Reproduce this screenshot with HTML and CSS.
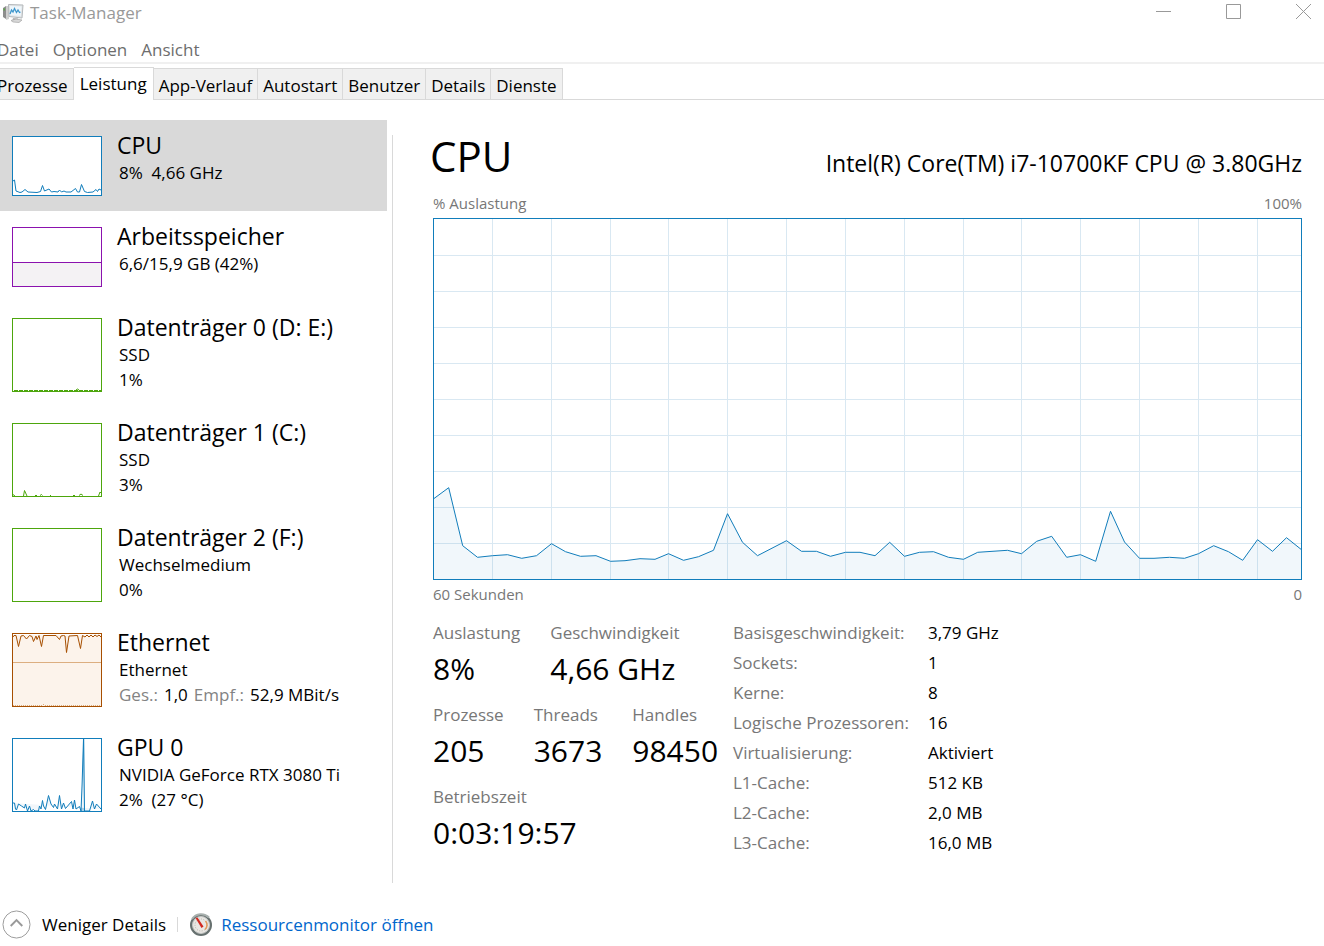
FILE: index.html
```html
<!DOCTYPE html>
<html lang="de">
<head>
<meta charset="utf-8">
<meta name="viewport" content="width=device-width, initial-scale=1">
<title>Task-Manager</title>
<link rel="stylesheet" href="styles.css">
</head>
<body>
<div class="window">
  <header class="titlebar">
    <svg class="app-icon" viewBox="0 0 22 20" aria-hidden="true">
      <path d="M1 5l3-2v13l-3-2z" fill="#8d8d8d"/>
      <path d="M4 3h3v13l-3 1z" fill="#cfcfcf"/>
      <rect x="1.500" y="5.500" width="1.500" height="2" fill="#58a846"/>
      <path d="M6.500 1.500l14.500.5-1 13-13-1.500z" fill="#e3e6e8" stroke="#b4b8bb" stroke-width="1"/>
      <path d="M8 3l11.500.5-.8 9.500-10.700-1z" fill="#eef6fb"/>
      <path d="M8 11l1.500-4 1.500 2 1.500-3.500 2 4 1.500-2.500 1.500 2.500 1-.5" fill="none" stroke="#3f97cc" stroke-width="1.300"/>
      <path d="M11 15l5 .5.500 2-6-.5z" fill="#b5b5b5"/>
      <path d="M9 17.500l5-1.500 6 1-3 2.500-6-.5z" fill="#d8d8d8" stroke="#a5a5a5" stroke-width=".7"/>
    </svg>
    <h1 class="app-title">Task-Manager</h1>
    <div class="window-controls">
      <button type="button" class="control" aria-label="Minimieren"><svg viewBox="0 0 15 15"><path d="M0 7.500h15"/></svg></button>
      <button type="button" class="control" aria-label="Maximieren"><svg viewBox="0 0 15 15"><path d="M.5.500h14v14H.5z"/></svg></button>
      <button type="button" class="control" aria-label="Schließen"><svg viewBox="0 0 15 15"><path d="M0 0l15 15M15 0L0 15"/></svg></button>
    </div>
  </header>

  <nav class="menubar" aria-label="Menü">
    <button type="button">Datei</button>
    <button type="button">Optionen</button>
    <button type="button">Ansicht</button>
  </nav>

  <div class="tabs" role="tablist">
    <button type="button" role="tab" class="tab">Prozesse</button>
    <button type="button" role="tab" class="tab tab-active" aria-selected="true">Leistung</button>
    <button type="button" role="tab" class="tab">App-Verlauf</button>
    <button type="button" role="tab" class="tab">Autostart</button>
    <button type="button" role="tab" class="tab">Benutzer</button>
    <button type="button" role="tab" class="tab">Details</button>
    <button type="button" role="tab" class="tab">Dienste</button>
  </div>

  <main class="content">
    <nav class="resources" aria-label="Ressourcen">
      <button type="button" class="resource resource-short resource-active">
        <svg class="thumb blue" viewBox="0 0 88 58" preserveAspectRatio="none">
          <polyline points="0,44 1.500,43 3,54 7,55.500 9,55 12,52.500 15,55 24,55.500 27.500,54.500 29.500,48.500 31.500,54 36,52 38.500,55 41,54.500 45,55 46.500,53 48.500,55 51,54 53,55 58,55 62.500,51.500 64.500,55 66.500,55 68.500,47.500 71.500,54.500 74.500,55.500 80,55 83,52.500 84.500,54.500 86,52 88,53"/>
        </svg>
        <span class="resource-text"><span class="resource-name">CPU</span><span class="resource-line">8%&nbsp; 4,66 GHz</span></span>
      </button>
      <button type="button" class="resource resource-short">
        <svg class="thumb purple" viewBox="0 0 88 58" preserveAspectRatio="none">
          <rect class="area" x="0" y="34" width="88" height="24"/>
          <path d="M0 34.500h88"/>
        </svg>
        <span class="resource-text"><span class="resource-name">Arbeitsspeicher</span><span class="resource-line">6,6/15,9 GB (42%)</span></span>
      </button>
      <button type="button" class="resource">
        <svg class="thumb green" viewBox="0 0 88 72" preserveAspectRatio="none">
          <path d="M1 71.500h87" stroke-dasharray="4 1"/><path d="M63 71l1.500-1 1.500 1"/>
        </svg>
        <span class="resource-text"><span class="resource-name">Datenträger 0 (D: E:)</span><span class="resource-line">SSD</span><span class="resource-line">1%</span></span>
      </button>
      <button type="button" class="resource">
        <svg class="thumb green" viewBox="0 0 88 72" preserveAspectRatio="none">
          <path d="M0 70.500l2 1.500M10.500 72l1-5.500 2.500 5.500M22 71.500h2M27 71.500l1.500-1 1 1M37 71.500h1M60 71.500h2M66 71.500l2-1.500 2 1.500M85.500 72l1.500-4 1 1"/>
        </svg>
        <span class="resource-text"><span class="resource-name">Datenträger 1 (C:)</span><span class="resource-line">SSD</span><span class="resource-line">3%</span></span>
      </button>
      <button type="button" class="resource">
        <svg class="thumb green" viewBox="0 0 88 72" preserveAspectRatio="none"></svg>
        <span class="resource-text"><span class="resource-name">Datenträger 2 (F:)</span><span class="resource-line">Wechselmedium</span><span class="resource-line">0%</span></span>
      </button>
      <button type="button" class="resource">
        <svg class="thumb orange" viewBox="0 0 88 72" preserveAspectRatio="none">
          <rect class="area" x="0" y="1" width="88" height="71"/>
          <path class="faint" d="M0 28.500h88"/>
          <polyline points="0,3 1,1.500 3,1.500 5.500,12.500 8,2 10.500,1.500 13.500,5 16.500,1.500 19,2.500 20.500,7.500 23,2 24,5.500 26,1.500 28.500,12.500 30.500,1.500 43,1.500 46.500,5.500 48,2 50.500,1.500 52,2 53.500,18.500 56,2 64.500,1.500 67.500,14.500 69.500,1.500 72,3 74,1 76,3 78,1 80,3 82,1 84,2.500 86,1 88,3"/>
          <path class="faint" d="M0 71.500h30M30 70.500h1M32 71.500h56" stroke-dasharray="1 1"/>
        </svg>
        <span class="resource-text"><span class="resource-name">Ethernet</span><span class="resource-line">Ethernet</span><span class="resource-line rates"><span class="muted">Ges.:</span><span>1,0</span><span class="muted">Empf.:</span><span>52,9 MBit/s</span></span></span>
      </button>
      <button type="button" class="resource">
        <svg class="thumb blue" viewBox="0 0 88 72" preserveAspectRatio="none">
          <polygon class="spike" points="68,72 69.500,30 70.300,0 71.500,0 71.700,72"/>
          <polyline class="area-line" points="0,64 1.500,64 2.500,70 3.500,71 5.500,65 8.500,67 11.500,69 12.500,65 14.500,72 16.500,67 18,72 20.500,70.500 22,72 25.500,72 26.500,67 28,70 29.500,61.500 30.500,67 32.500,70.500 35.500,56.500 38,65 40.500,68.500 41.500,65 44.500,70 46.500,56.500 48.500,70 50.500,64 52.500,69.500 58.500,62.500 60,70 61.500,61 63,70 66.500,67.500 68,72 69,48 70.500,0 71.500,72 76.500,72 79.500,62 81.500,70 83.500,65 88,70"/>
        </svg>
        <span class="resource-text"><span class="resource-name">GPU 0</span><span class="resource-line">NVIDIA GeForce RTX 3080 Ti</span><span class="resource-line">2%&nbsp; (27 °C)</span></span>
      </button>
    </nav>

    <section class="detail">
      <div class="detail-head">
        <h2 class="detail-title">CPU</h2>
        <p class="detail-model">Intel(R) Core(TM) i7-10700KF CPU @ 3.80GHz</p>
      </div>
      <div class="axis axis-top"><span>% Auslastung</span><span>100%</span></div>
      <svg class="chart" viewBox="0 0 867 360" preserveAspectRatio="none" role="img" aria-label="CPU-Auslastung">
        <path class="grid" d="M0 36.500h867M0 72.500h867M0 108.500h867M0 144.500h867M0 180.500h867M0 216.500h867M0 252.500h867M0 288.500h867M0 324.500h867M58.500 0v360M117.500 0v360M176.500 0v360M234.500 0v360M293.500 0v360M352.500 0v360M411.500 0v360M470.500 0v360M529.500 0v360M587.500 0v360M646.500 0v360M705.500 0v360M764.500 0v360M823.500 0v360"/>
        <polygon class="usage-area" points="0,360 0,279.500 14.700,268.700 28.700,326.700 43.500,338.300 58.500,336.700 73.500,335.700 87.700,339.300 102.500,336.700 117.500,324.700 131.500,332.700 146.500,337.300 162,336.700 176.500,342.300 191,341.700 206,339.700 221,340.300 234.500,334.700 249.500,341.300 264.500,337.700 279.500,331.300 293.500,294.700 308.500,323.300 323.500,336.700 352.500,321.700 367.500,332.300 382.500,332.300 396.500,337.300 411.500,333.300 426,333.300 441,336.700 455.700,323.300 470.500,337.300 485.500,333.300 499.500,332.700 514.500,338.300 529.500,340.300 543.700,333.300 573.500,331.300 587.500,334.700 602.700,322.300 617.700,317.300 632.700,338.300 646.500,335.700 661.700,342.300 676.500,292.300 690.500,323 705.500,339.300 720,339.300 735.500,338.300 750.500,339.300 764.500,334.700 779.700,326.700 794.500,332.700 808.700,341.300 823.500,320.700 838.500,332.300 852.500,318.700 867,330.300 867,360"/>
        <polyline class="usage-line" points="0,279.500 14.700,268.700 28.700,326.700 43.500,338.300 58.500,336.700 73.500,335.700 87.700,339.300 102.500,336.700 117.500,324.700 131.500,332.700 146.500,337.300 162,336.700 176.500,342.300 191,341.700 206,339.700 221,340.300 234.500,334.700 249.500,341.300 264.500,337.700 279.500,331.300 293.500,294.700 308.500,323.300 323.500,336.700 352.500,321.700 367.500,332.300 382.500,332.300 396.500,337.300 411.500,333.300 426,333.300 441,336.700 455.700,323.300 470.500,337.300 485.500,333.300 499.500,332.700 514.500,338.300 529.500,340.300 543.700,333.300 573.500,331.300 587.500,334.700 602.700,322.300 617.700,317.300 632.700,338.300 646.500,335.700 661.700,342.300 676.500,292.300 690.500,323 705.500,339.300 720,339.300 735.500,338.300 750.500,339.300 764.500,334.700 779.700,326.700 794.500,332.700 808.700,341.300 823.500,320.700 838.500,332.300 852.500,318.700 867,330.300"/>
      </svg>
      <div class="axis axis-bottom"><span>60 Sekunden</span><span>0</span></div>

      <div class="stats">
        <div class="live">
          <dl class="live-row">
            <div><dt>Auslastung</dt><dd>8%</dd></div>
            <div><dt>Geschwindigkeit</dt><dd>4,66 GHz</dd></div>
          </dl>
          <dl class="live-row">
            <div><dt>Prozesse</dt><dd>205</dd></div>
            <div><dt>Threads</dt><dd>3673</dd></div>
            <div><dt>Handles</dt><dd>98450</dd></div>
          </dl>
          <dl class="live-row">
            <div><dt>Betriebszeit</dt><dd>0:03:19:57</dd></div>
          </dl>
        </div>
        <dl class="specs">
          <dt>Basisgeschwindigkeit:</dt><dd>3,79 GHz</dd>
          <dt>Sockets:</dt><dd>1</dd>
          <dt>Kerne:</dt><dd>8</dd>
          <dt>Logische Prozessoren:</dt><dd>16</dd>
          <dt>Virtualisierung:</dt><dd>Aktiviert</dd>
          <dt>L1-Cache:</dt><dd>512 KB</dd>
          <dt>L2-Cache:</dt><dd>2,0 MB</dd>
          <dt>L3-Cache:</dt><dd>16,0 MB</dd>
        </dl>
      </div>
    </section>
  </main>

  <footer class="footer">
    <button type="button" class="less">
      <svg class="less-icon" viewBox="0 0 30 30" aria-hidden="true"><circle cx="15" cy="15" r="14"/><path class="chevron" d="M9 16.500l6-6 6 6"/></svg>
      <span>Weniger Details</span>
    </button>
    <span class="separator"></span>
    <a class="monitor" href="#">
      <svg class="monitor-icon" viewBox="0 0 24 24" aria-hidden="true">
        <circle cx="12" cy="12" r="11" fill="#66706f"/>
        <path d="M3 6a11 11 0 0 1 17-1.500" fill="none" stroke="#a8b0ae" stroke-width="2"/>
        <circle cx="12" cy="12" r="8.500" fill="#e9e7e3" stroke="#c4c6c4" stroke-width="1"/>
        <circle cx="12" cy="12" r="6" fill="none" stroke="#b5b1aa" stroke-width="1" stroke-dasharray="1 1.500"/>
        <path d="M16.500 8a6 6 0 0 1-.5 8.500" fill="none" stroke="#e39a5b" stroke-width="1.500"/>
        <path d="M6.500 5l2-.5 6 9-2 1.500z" fill="#d3281f"/>
      </svg>
      <span>Ressourcenmonitor öffnen</span>
    </a>
  </footer>
</div>
</body>
</html>
```
FILE: styles.css
```css
* { box-sizing: border-box; }

body {
  margin: 0;
  background: #fff;
  color: #000;
  font: 17px/25px "Open Sans", "Noto Sans", sans-serif;
}

button {
  margin: 0;
  padding: 0;
  border: 0;
  background: none;
  color: inherit;
  font: inherit;
  text-align: left;
}

h1, h2, p, dl, dd { margin: 0; font-weight: 400; }

svg { display: block; }

.window {
  display: flex;
  flex-direction: column;
  min-height: 100vh;
  overflow: hidden;
}

.titlebar {
  display: flex;
  align-items: center;
  height: 25px;
  padding-left: 2px;
}
.app-icon { width: 22px; height: 20px; margin-right: 6px; }
.app-title { flex: 1; color: #999; font-size: 17px; }
.window-controls { display: flex; align-self: flex-start; gap: 29px; }
.control { width: 41px; height: 23px; }
.control svg {
  width: 15px;
  height: 15px;
  margin: 0 auto;
  fill: none;
  stroke: #999;
}

.menubar {
  display: flex;
  gap: 14px;
  margin-left: -3px;
  padding: 12px 0 0;
  color: #6d6d6d;
}

.tabs {
  display: flex;
  align-items: flex-end;
  padding-top: 3px;
  border-top: 2px solid #f0f0f0;
  border-bottom: 1px solid #d9d9d9;
}
.tab {
  height: 31px;
  padding: 3px 5px 0;
  border: 1px solid #d9d9d9;
  border-width: 1px 1px 0 0;
  background: #f0f0f0;
}
.tab:first-child { margin-left: -8px; }
.tab-active {
  height: 33px;
  margin-bottom: -1px;
  padding: 0 6px 2px;
  background: #fff;
}

.content {
  display: flex;
  flex: 1;
  padding: 20px 22px 0 0;
}

.resources {
  display: flex;
  flex: 0 0 387px;
  flex-direction: column;
}
.resource {
  display: flex;
  align-items: flex-start;
  gap: 15px;
  padding: 10px 12px 15px;
}
.resource-active { background: #d9d9d9; }
.thumb {
  flex: none;
  width: 90px;
  height: 74px;
  margin-top: 6px;
  border: 1px solid;
  background: #fff;
  fill: none;
  stroke: currentColor;
}
.resource-short .thumb { height: 60px; }
.thumb .area { stroke: none; }
.blue { color: #117dbb; }
.purple { color: #8b12ae; }
.purple .area { fill: #f4f2f4; }
.green { color: #4da60c; }
.orange { color: #a74f01; }
.orange .area { fill: #fcf3eb; }
.thumb .faint { stroke: #dcae80; }
.thumb .spike { fill: #a9cfe5; stroke: none; }
.area-line { fill: #f1f6fa; }
.resource-text { display: flex; flex-direction: column; }
.resource-name { font-size: 23px; line-height: 30px; }
.resource-line { padding-left: 2px; white-space: nowrap; }
.rates { display: flex; gap: 6px; }
.muted { color: #838383; }

.detail {
  flex: 1;
  min-width: 0;
  margin: 15px 0 0 5px;
  padding-left: 40px;
  border-left: 1px solid #d9d9d9;
}
.detail-head {
  display: flex;
  align-items: baseline;
  justify-content: space-between;
  margin-left: -3px;
}
.detail-title { font-size: 42px; line-height: 42px; }
.detail-model { font-size: 23px; line-height: 30px; }
.axis {
  display: flex;
  justify-content: space-between;
  color: #777;
  font-size: 15px;
  line-height: 20px;
}
.axis-top { padding: 15px 0 5px; }
.axis-bottom { padding: 4px 0 14px; }
.chart {
  width: 100%;
  height: 362px;
  border: 1px solid #117dbb;
  fill: none;
}
.chart * { vector-effect: non-scaling-stroke; }
.grid { stroke: #d9e8f2; }
.usage-area { fill: #117dbb; fill-opacity: 0.06; }
.usage-line { stroke: #117dbb; }

.stats { display: flex; }
.stats dt { color: #777; line-height: 30px; white-space: nowrap; }
.live { flex: 0 0 300px; }
.live-row { display: flex; gap: 30px; margin-bottom: 10px; }
.live-row dd { font-size: 30px; line-height: 42px; }
.specs {
  display: grid;
  grid-template-columns: 195px auto;
  align-content: start;
  line-height: 30px;
}

.footer {
  display: flex;
  align-items: center;
  padding: 27px 0 7px 2px;
}
.less, .monitor { display: flex; align-items: center; }
.less { gap: 11px; }
.less-icon { width: 29px; height: 29px; fill: none; stroke: #999; }
.chevron { stroke-width: 2; }
.separator { width: 1px; height: 15px; margin: 0 11px; background: #d9d9d9; }
.monitor { gap: 8px; color: #0066cc; text-decoration: none; }
.monitor-icon { width: 24px; height: 24px; }
```
